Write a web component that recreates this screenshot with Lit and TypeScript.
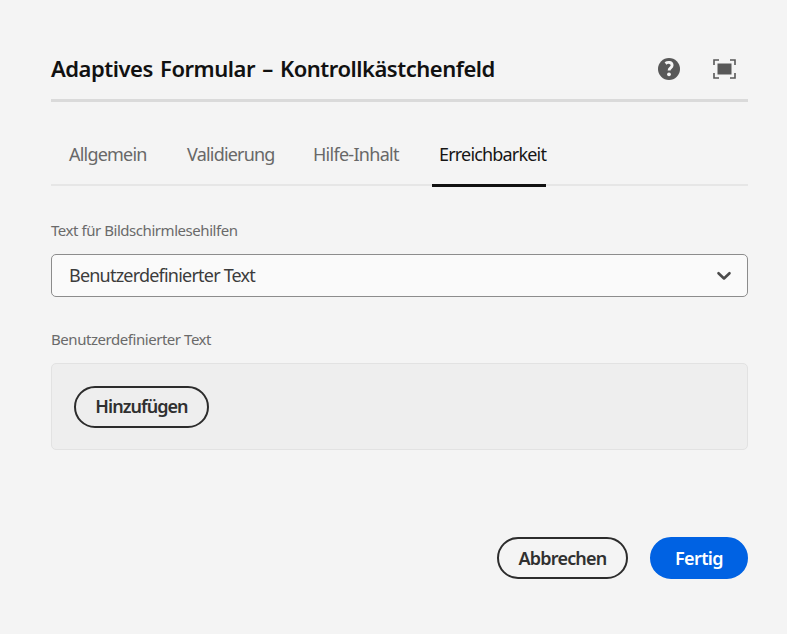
import { LitElement, html, css } from "lit";
import { customElement, state } from "lit/decorators.js";
import { classMap } from "lit/directives/class-map.js";

const TABS = [
  { id: "general", label: "Allgemein" },
  { id: "validation", label: "Validierung" },
  { id: "help", label: "Hilfe-Inhalt" },
  { id: "accessibility", label: "Erreichbarkeit" },
];

@customElement("app-root")
export class AppRoot extends LitElement {
  @state() private active = "accessibility";

  static styles = css`
    :host {
      display: block;
      height: 634px;
      box-sizing: border-box;
      overflow: hidden;
      background: #f4f4f4;
      padding: 38px 39px 55px 51px;
      font-family: "Noto Sans", "Open Sans", sans-serif;
      color: #4b4b4b;
    }
    * { box-sizing: border-box; }
    button { font-family: inherit; cursor: pointer; }
    svg { display: block; }
    .dialog { display: flex; flex-direction: column; height: 541px; }
    .header {
      display: flex;
      align-items: center;
      height: 64px;
      border-bottom: 3px solid #dadada;
    }
    .title {
      flex: 1;
      margin: 0;
      padding-bottom: 1px;
      font-size: 22px;
      line-height: 30px;
      font-weight: 600;
      letter-spacing: -0.48px;
      word-spacing: 2px;
      color: #111;
      white-space: nowrap;
    }
    .tools { display: flex; align-items: center; gap: 33px; margin-right: 12px; }
    .tool { display: block; border: 0; padding: 0; background: none; color: #585858; }
    .tabs {
      display: flex;
      height: 84px;
      padding-left: 18px;
      border-bottom: 2px solid #e6e6e6;
    }
    .tab {
      height: 85px;
      padding: 22px 0 0;
      border: 0;
      border-bottom: 3px solid transparent;
      background: none;
      font-size: 18px;
      line-height: 24px;
      text-align: left;
      white-space: nowrap;
      letter-spacing: -0.8px;
      color: #686868;
    }
    .tab.general { width: 118px; }
    .tab.validation { width: 126px; }
    .tab.help { width: 119px; letter-spacing: -0.72px; }
    .tab.accessibility { width: 114px; padding-left: 7px; letter-spacing: -0.82px; }
    .tab.active { color: #161616; border-bottom-color: #111; }
    .label {
      font-size: 15px;
      line-height: 20px;
      letter-spacing: -0.45px;
      color: #6a6a6a;
      white-space: nowrap;
    }
    .label.reader { margin-top: 34px; }
    .label.custom { margin-top: 32px; }
    .select {
      display: flex;
      align-items: center;
      justify-content: space-between;
      flex: none;
      height: 43px;
      margin-top: 14px;
      padding: 0 15px 0 17px;
      border: 1px solid #8c8c8c;
      border-radius: 5px;
      background: #fafafa;
      color: #3c3c3c;
      font-size: 18px;
      letter-spacing: -0.79px;
    }
    .value { padding-bottom: 2px; }
    .panel {
      flex: none;
      display: flex;
      align-items: center;
      height: 87px;
      margin-top: 14px;
      padding-left: 22px;
      border: 1px solid #e2e2e2;
      border-radius: 5px;
      background: #eeeeee;
    }
    .button {
      display: flex;
      align-items: center;
      justify-content: center;
      height: 42px;
      padding: 0 0 1px;
      border: 2px solid #2c2c2c;
      border-radius: 21px;
      background: none;
      font-size: 18px;
      font-weight: 600;
      letter-spacing: -0.8px;
      color: #303030;
    }
    .button.add { width: 135px; letter-spacing: -0.95px; padding-bottom: 2px; }
    .button.cancel { width: 131px; }
    .button.done { width: 98px; background: #0062e3; border-color: #0062e3; color: #fff; letter-spacing: -0.6px; }
    .footer { display: flex; justify-content: flex-end; gap: 22px; margin-top: auto; }
  `;

  render() {
    return html`
      <div class="dialog">
        <header class="header">
          <h1 class="title">Adaptives Formular – Kontrollkästchenfeld</h1>
          <div class="tools">
            <button class="tool" aria-label="Hilfe">
              <svg width="22" height="22" viewBox="0 0 22 22">
                <circle cx="11" cy="11" r="11" fill="currentColor" />
                <path d="M7.500 5.500c2.500-2 6.600-1.200 6.600 1.800 0 2.700-3 2.500-3 5.300" fill="none" stroke="#f4f4f4" stroke-width="2.900" />
                <circle cx="11" cy="16.300" r="1.900" fill="#f4f4f4" />
              </svg>
            </button>
            <button class="tool" aria-label="Vollbild">
              <svg width="23" height="20" viewBox="0 0 23 20">
                <rect x="4.500" y="4.500" width="14" height="11" fill="currentColor" />
                <path d="M1 6V1h5M17 1h5v5M22 14v5h-5M6 19H1v-5" fill="none" stroke="currentColor" stroke-width="1.600" />
              </svg>
            </button>
          </div>
        </header>
        <nav class="tabs" role="tablist">
          ${TABS.map(
            (t) => html`<button
              role="tab"
              class=${classMap({ tab: true, [t.id]: true, active: t.id === this.active })}
              @click=${() => (this.active = t.id)}
            >${t.label}</button>`
          )}
        </nav>
        <div class="label reader">Text für Bildschirmlesehilfen</div>
        <div class="select" role="combobox">
          <span class="value">Benutzerdefinierter Text</span>
          <svg width="16" height="10" viewBox="0 0 16 10">
            <path d="M2.500 2.200 8 7.500l5.500-5.300" fill="none" stroke="#4b4b4b" stroke-width="2.600" stroke-linecap="round" stroke-linejoin="round" />
          </svg>
        </div>
        <div class="label custom">Benutzerdefinierter Text</div>
        <div class="panel"><button class="button add">Hinzufügen</button></div>
        <footer class="footer">
          <button class="button cancel">Abbrechen</button>
          <button class="button done">Fertig</button>
        </footer>
      </div>
    `;
  }
}
